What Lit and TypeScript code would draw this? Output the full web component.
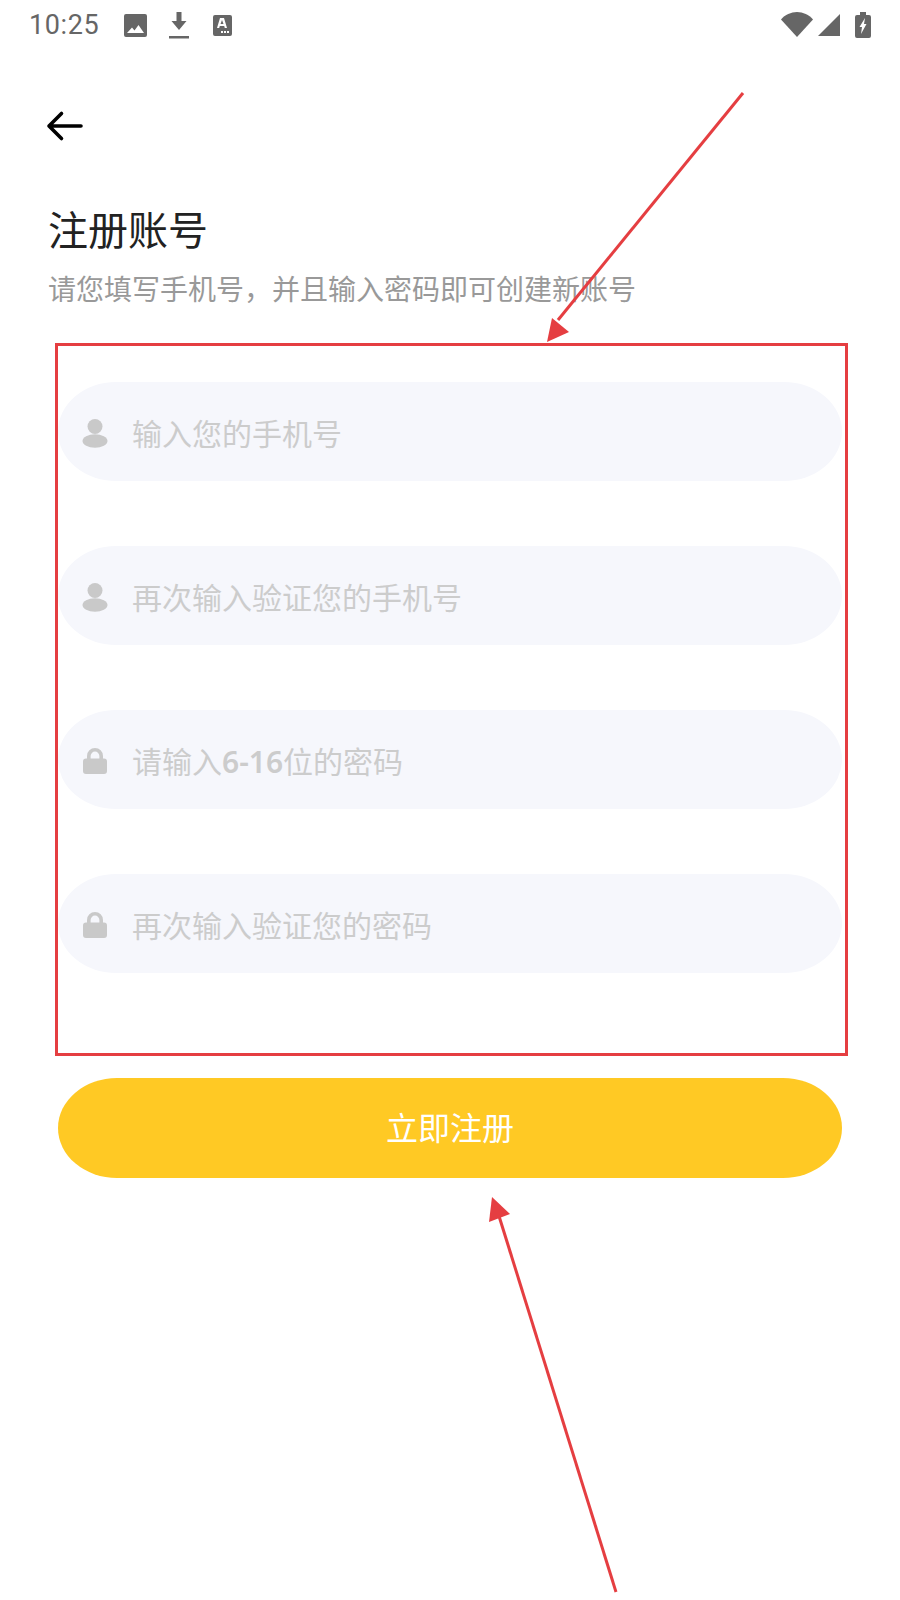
import { LitElement, html, css, svg } from "lit";
import { customElement } from "lit/decorators.js";

const personIcon = svg`<circle cx="13" cy="8.5" r="7.5" /><ellipse cx="13" cy="23" rx="12.5" ry="6.8" />`;
const lockIcon = svg`<path d="M5 13V10a8 8 0 0 1 16 0v3h-3.6V10a4.4 4.4 0 0 0-8.8 0v3z" /><rect x="1" y="12.5" width="24" height="15.5" rx="3" />`;

const fields = [
  { icon: personIcon, text: html`输入您的手机号` },
  { icon: personIcon, text: html`再次输入验证您的手机号` },
  { icon: lockIcon, text: html`请输入<b>6-16</b>位的密码` },
  { icon: lockIcon, text: html`再次输入验证您的密码` },
];

@customElement("app-root")
export class AppRoot extends LitElement {
  static styles = css`
    :host {
      display: block;
      position: relative;
      width: 900px;
      height: 1600px;
      background: #fff;
      overflow: hidden;
      font-family: "Noto Sans CJK SC", "Noto Sans", sans-serif;
    }
    .status {
      display: flex;
      align-items: center;
      height: 50px;
      padding: 0 29px 0 29px;
      color: #666;
    }
    .time {
      font-family: Roboto, sans-serif;
      font-size: 27px;
      letter-spacing: 0.6px;
      width: 95px;
    }
    .status svg {
      display: block;
      fill: #666;
    }
    .img-icon {
      margin-right: 22px;
    }
    .dl-icon {
      margin-right: 24px;
    }
    .spacer {
      flex: 1;
    }
    .wifi-icon {
      margin-bottom: 2px;
    }
    .sig-icon {
      margin: 0 15px 0 5px;
    }
    .back {
      display: block;
      margin: 60px 0 0 46px;
      width: 40px;
      height: 32px;
    }
    h1 {
      margin: 58px 0 0 48px;
      font-size: 40px;
      line-height: 56px;
      font-weight: 400;
      color: #222;
    }
    .sub {
      margin: 12px 0 0 48px;
      font-size: 28px;
      line-height: 40px;
      color: #999;
    }
    .form {
      box-sizing: border-box;
      width: 793px;
      height: 713px;
      margin: 35px 0 0 55px;
      border: 3px solid #e53e41;
      padding: 36px 3px 0 0;
      display: flex;
      flex-direction: column;
      gap: 65px;
    }
    .field {
      display: flex;
      align-items: center;
      height: 99px;
      border-radius: 58px / 49.5px;
      background: #f6f7fc;
      color: #ccc;
      font-size: 30px;
    }
    .field svg {
      fill: #c9c9c9;
      margin: 3px 24px 0 24px;
      flex: none;
    }
    .field b {
      font-family: "Noto Sans", sans-serif;
      font-weight: 600;
    }
    .submit {
      display: flex;
      align-items: center;
      justify-content: center;
      box-sizing: border-box;
      width: 784px;
      height: 100px;
      margin: 22px 0 0 58px;
      padding-bottom: 4px;
      border-radius: 59px / 50px;
      background: #ffc924;
      color: #fff;
      font-size: 32px;
    }
    .arrows {
      position: absolute;
      inset: 0;
      pointer-events: none;
    }
    .arrows line {
      stroke: #e53e41;
      stroke-width: 3;
    }
    .arrows polygon {
      fill: #e53e41;
    }
  `;

  render() {
    return html`
      <div class="status">
        <span class="time">10:25</span>
        <svg class="img-icon" width="23" height="23" viewBox="0 0 23 23">
          <path d="M2 0h19a2 2 0 0 1 2 2v19a2 2 0 0 1-2 2H2a2 2 0 0 1-2-2V2a2 2 0 0 1 2-2zm1 19h17l-5.500-8-4 5.500-2.500-3z" fill-rule="evenodd" />
        </svg>
        <svg class="dl-icon" width="20" height="27" viewBox="0 0 20 27">
          <path d="M7.500 0h5v9h5L10 18 2.500 9h5zM0 24h20v2.500H0z" />
        </svg>
        <svg width="19" height="21" viewBox="0 0 19 21">
          <path d="M2 0h15a2 2 0 0 1 2 2v17a2 2 0 0 1-2 2H2a2 2 0 0 1-2-2V2a2 2 0 0 1 2-2zm5 3L4 13h2.200l.6-2h4.400l.6 2H14L11 3zm.5 6L9 5l1.500 4zM11 16v2h2v-2zm3 0v2h2v-2zm-6 0v2h2v-2z" fill-rule="evenodd" />
        </svg>
        <span class="spacer"></span>
        <svg class="wifi-icon" width="32" height="25" viewBox="0 0 32 25">
          <path d="M0 7.500C4 2.800 10 0 16 0s12 2.800 16 7.500L16 25z" />
        </svg>
        <svg class="sig-icon" width="22" height="22" viewBox="0 0 22 22">
          <path d="M22 0v22H0z" />
        </svg>
        <svg width="16" height="26" viewBox="0 0 16 26">
          <path d="M5 0h6v3h3a2 2 0 0 1 2 2v19a2 2 0 0 1-2 2H2a2 2 0 0 1-2-2V5a2 2 0 0 1 2-2h3zm5 6L4.500 15H7l-1 7 5.500-10H9z" fill-rule="evenodd" />
        </svg>
      </div>

      <svg class="back" viewBox="0 0 40 32" fill="none" stroke="#000" stroke-width="3.6" stroke-linecap="round" stroke-linejoin="round">
        <path d="M35 16H3M15.500 3.500 3 16l12.500 12.500" />
      </svg>

      <h1>注册账号</h1>
      <div class="sub">请您填写手机号，并且输入密码即可创建新账号</div>

      <div class="form">
        ${fields.map(
          (f) => html`
            <div class="field">
              <svg width="26" height="30" viewBox="0 0 26 30">${f.icon}</svg>
              <span>${f.text}</span>
            </div>
          `
        )}
      </div>

      <div class="submit">立即注册</div>

      <svg class="arrows" width="900" height="1600" viewBox="0 0 900 1600">
        <line x1="743" y1="93" x2="558" y2="320" />
        <polygon points="547,342 552,318 569,332" />
        <line x1="616" y1="1592" x2="499" y2="1216" />
        <polygon points="492,1197 489,1222 510,1214" />
      </svg>
    `;
  }
}
